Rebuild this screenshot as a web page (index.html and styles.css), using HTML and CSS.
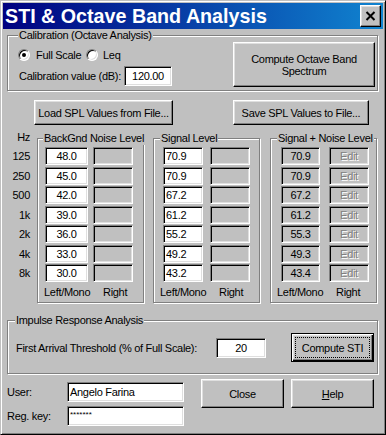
FILE: index.html
```html
<!DOCTYPE html>
<html>
<head>
<meta charset="utf-8">
<link rel="stylesheet" href="styles.css">
</head>
<body>
<div class="win">
  <div class="titlebar">
    <span class="title">STI &amp; Octave Band Analysis</span>
    <span class="xbtn"><svg width="11" height="10" viewBox="0 0 11 10"><path d="M1.5 1 L9.5 9 M9.5 1 L1.5 9" stroke="#000" stroke-width="2" fill="none"/></svg></span>
  </div>
  <div class="content">
    <div class="group cal">
      <span class="glabel gl-cal">Calibration (Octave Analysis)</span>
      <div class="cal-left">
        <div class="radios">
          <span class="radio on"></span><span class="rl1">Full Scale</span>
          <span class="radio"></span><span class="rl2">Leq</span>
        </div>
        <div class="calrow">
          <span>Calibration value (dB):</span>
          <span class="field center">120.00</span>
        </div>
      </div>
      <div class="btn octbtn"><span>Compute Octave Band</span><span>Spectrum</span></div>
    </div>

    <div class="filerow">
      <div class="btn load">Load SPL Values from File...</div>
      <div class="btn save">Save SPL Values to File...</div>
    </div>

    <div class="table">
      <div class="hzcol">
        <div class="hzhead">Hz</div>
        <div class="hzrows">
          <div>125</div><div>250</div><div>500</div><div>1k</div><div>2k</div><div>4k</div><div>8k</div>
        </div>
      </div>

      <div class="group band bg">
        <span class="glabel gl-bg">BackGnd Noise Level</span>
        <div class="bandgrid">
          <span class="field center">48.0</span><span class="field gray"></span>
          <span class="field center">45.0</span><span class="field gray"></span>
          <span class="field center">42.0</span><span class="field gray"></span>
          <span class="field center">39.0</span><span class="field gray"></span>
          <span class="field center">36.0</span><span class="field gray"></span>
          <span class="field center">33.0</span><span class="field gray"></span>
          <span class="field center">30.0</span><span class="field gray"></span>
        </div>
        <div class="foot"><span class="lm">Left/Mono</span><span>Right</span></div>
      </div>

      <div class="group band sig">
        <span class="glabel">Signal Level</span>
        <div class="bandgrid">
          <span class="field left">70.9</span><span class="field gray"></span>
          <span class="field left">70.9</span><span class="field gray"></span>
          <span class="field left">67.2</span><span class="field gray"></span>
          <span class="field left">61.2</span><span class="field gray"></span>
          <span class="field left">55.2</span><span class="field gray"></span>
          <span class="field left">49.2</span><span class="field gray"></span>
          <span class="field left">43.2</span><span class="field gray"></span>
        </div>
        <div class="foot"><span class="lm">Left/Mono</span><span>Right</span></div>
      </div>

      <div class="group band sn">
        <span class="glabel">Signal + Noise Level</span>
        <div class="bandgrid">
          <span class="field gray center">70.9</span><span class="field gray center dis">Edit</span>
          <span class="field gray center">70.9</span><span class="field gray center dis">Edit</span>
          <span class="field gray center">67.2</span><span class="field gray center dis">Edit</span>
          <span class="field gray center">61.2</span><span class="field gray center dis">Edit</span>
          <span class="field gray center">55.3</span><span class="field gray center dis">Edit</span>
          <span class="field gray center">49.3</span><span class="field gray center dis">Edit</span>
          <span class="field gray center">43.4</span><span class="field gray center dis">Edit</span>
        </div>
        <div class="foot"><span class="lm">Left/Mono</span><span>Right</span></div>
      </div>
    </div>

    <div class="group imp">
      <span class="glabel gl-imp">Impulse Response Analysis</span>
      <span>First Arrival Threshold (% of Full Scale):</span>
      <span class="field center thr">20</span>
      <div class="btn def">Compute STI</div>
    </div>

    <div class="bottom">
      <div class="userform">
        <span>User:</span><span class="field left">Angelo Farina</span>
        <span>Reg. key:</span><span class="field left key">*******</span>
      </div>
      <div class="btns">
        <div class="btn bb">Close</div>
        <div class="btn bb"><span><u>H</u>elp</span></div>
      </div>
    </div>
  </div>
</div>
</body>
</html>
```

FILE: styles.css
```css
* { box-sizing: border-box; }
body {
  margin: 0;
  background: #c0c0c0;
  font-family: "Liberation Sans", Arial, sans-serif;
  font-size: 11px;
  letter-spacing: -0.3px;
  color: #000;
}
.win {
  width: 386px;
  height: 435px;
  background: #c0c0c0;
  border: 1px solid;
  border-color: #c0c0c0 #000 #000 #c0c0c0;
  box-shadow: inset 1px 1px #fff, inset -1px -1px #808080;
  padding: 2px;
  display: flex;
  flex-direction: column;
}
.titlebar {
  height: 26px;
  flex: none;
  background: linear-gradient(90deg, #000080, #1084d0);
  display: flex;
  align-items: center;
  color: #fff;
}
.title {
  font-weight: bold;
  font-size: 19.7px;
  letter-spacing: 0;
  padding-left: 2px;
  line-height: 26px;
  white-space: nowrap;
}
.xbtn {
  margin-left: auto;
  margin-right: 2px;
  width: 21px;
  height: 22px;
  background: #c0c0c0;
  border: 1px solid;
  border-color: #fff #000 #000 #fff;
  box-shadow: inset -1px -1px #808080, inset 1px 1px #dfdfdf;
  display: flex;
  align-items: center;
  justify-content: center;
}
.content {
  padding: 0 5px 0 4px;
  display: flex;
  flex-direction: column;
}

/* etched group box */
.group {
  position: relative;
  border: 1px solid #808080;
  box-shadow: inset 1px 1px #fff, 1px 1px #fff;
}
.glabel {
  position: absolute;
  top: -7px;
  left: 6px;
  padding: 0 1px;
  background: #c0c0c0;
  line-height: 13px;
  white-space: nowrap;
}
.gl-cal { left: 10px; }
.gl-imp { left: 7px; }
.gl-bg { left: 5px; }

/* widgets */
.btn {
  background: #c0c0c0;
  border: 1px solid;
  border-color: #fff #000 #000 #fff;
  box-shadow: inset -1px -1px #808080, inset 1px 1px #dfdfdf;
  display: flex;
  align-items: center;
  justify-content: center;
  white-space: nowrap;
}
.field {
  background: #fff;
  border: 1px solid;
  border-color: #808080 #fff #fff #808080;
  box-shadow: inset 1px 1px #000, inset -1px -1px #dfdfdf;
  display: flex;
  align-items: center;
  white-space: nowrap;
  overflow: hidden;
}
.field.gray { background: #c0c0c0; }
.field.center { justify-content: center; }
.field.left { padding-left: 2px; }
.dis { color: #808080; text-shadow: 1px 1px #fff; }

.radio {
  width: 12px;
  height: 12px;
  border-radius: 50%;
  background: #fff;
  border: 1px solid;
  border-color: #808080 #fff #fff #808080;
  box-shadow: inset 1px 1px #000, inset -1px -1px #dfdfdf;
  display: flex;
  align-items: center;
  justify-content: center;
}
.radio.on::after {
  content: "";
  width: 4px;
  height: 4px;
  border-radius: 50%;
  background: #000;
}

/* calibration */
.cal {
  margin-top: 6px;
  height: 56px;
  display: flex;
}
.cal-left { padding: 13px 0 0 11px; }
.radios {
  display: flex;
  align-items: center;
  height: 12px;
  margin-left: -1px;
}
.rl1 { width: 50px; margin-left: 6px; }
.rl2 { margin-left: 5px; }
.calrow {
  margin-top: 5px;
  display: grid;
  grid-template-columns: 105px 48px;
  grid-template-rows: 20px;
  align-items: center;
}
.calrow .field { height: 20px; }
.octbtn {
  margin: 6px 2px 0 auto;
  width: 142px;
  height: 45px;
  flex-direction: column;
  line-height: 12px;
}

/* file buttons */
.filerow {
  margin-top: 9px;
  display: flex;
  height: 25px;
}
.load { margin-left: 27px; width: 139px; }
.save { margin-left: 60px; width: 136px; }

/* table */
.table {
  margin-top: 6px;
  display: flex;
  align-items: flex-start;
}
.hzcol {
  width: 30px;
  padding-right: 7px;
  text-align: right;
}
.hzhead { line-height: 13px; }
.hzrows {
  margin-top: 3px;
  display: grid;
  grid-auto-rows: 18px;
  row-gap: 1.5px;
  align-items: center;
}
.band {
  margin-top: 7px;
  width: 107px;
  height: 165px;
  padding-top: 8px;
}
.sig { margin-left: 9px; }
.sn { margin-left: 10px; }
.bandgrid {
  display: grid;
  grid-auto-rows: 18px;
  row-gap: 1.5px;
}
.bg .bandgrid { margin-left: 7px; grid-template-columns: 43px 40px; column-gap: 5px; }
.sig .bandgrid { margin-left: 9px; grid-template-columns: 40px 40px; column-gap: 7px; }
.sn .bandgrid { margin-left: 10px; grid-template-columns: 39px 40px; column-gap: 9px; }
.foot {
  margin-top: 4px;
  margin-left: 6px;
  display: flex;
  line-height: 13px;
}
.foot .lm { width: 59px; }

/* impulse */
.imp {
  margin-top: 17px;
  height: 54px;
  padding: 12px 0 0 8px;
  display: grid;
  grid-template-columns: 200px 50px 108px;
  grid-template-rows: 29px;
  align-items: center;
}
.thr { height: 20px; }
.def {
  margin-left: 25px;
  width: 83px;
  height: 29px;
  position: relative;
  border: 1px solid #000;
  box-shadow: inset 1px 1px #fff, inset -1px -1px #000, inset -2px -2px #808080, inset 2px 2px #dfdfdf;
}
.def::after {
  content: "";
  position: absolute;
  top: 3px;
  left: 3px;
  right: 3px;
  bottom: 3px;
  border: 1px dotted #000;
}

/* bottom */
.bottom {
  padding-top: 5px;
  display: flex;
  align-items: flex-start;
}
.userform {
  margin-top: 3px;
  display: grid;
  grid-template-columns: 60px 117px;
  grid-auto-rows: 20px;
  row-gap: 4px;
  align-items: center;
}
.userform .field { height: 20px; }
.key {
  align-items: flex-start;
  font-size: 8px;
  letter-spacing: 0;
  padding-top: 3px;
  padding-left: 3px;
}
.btns {
  margin-left: 17px;
  display: flex;
  gap: 7px;
}
.bb { width: 83px; height: 29px; }
```
